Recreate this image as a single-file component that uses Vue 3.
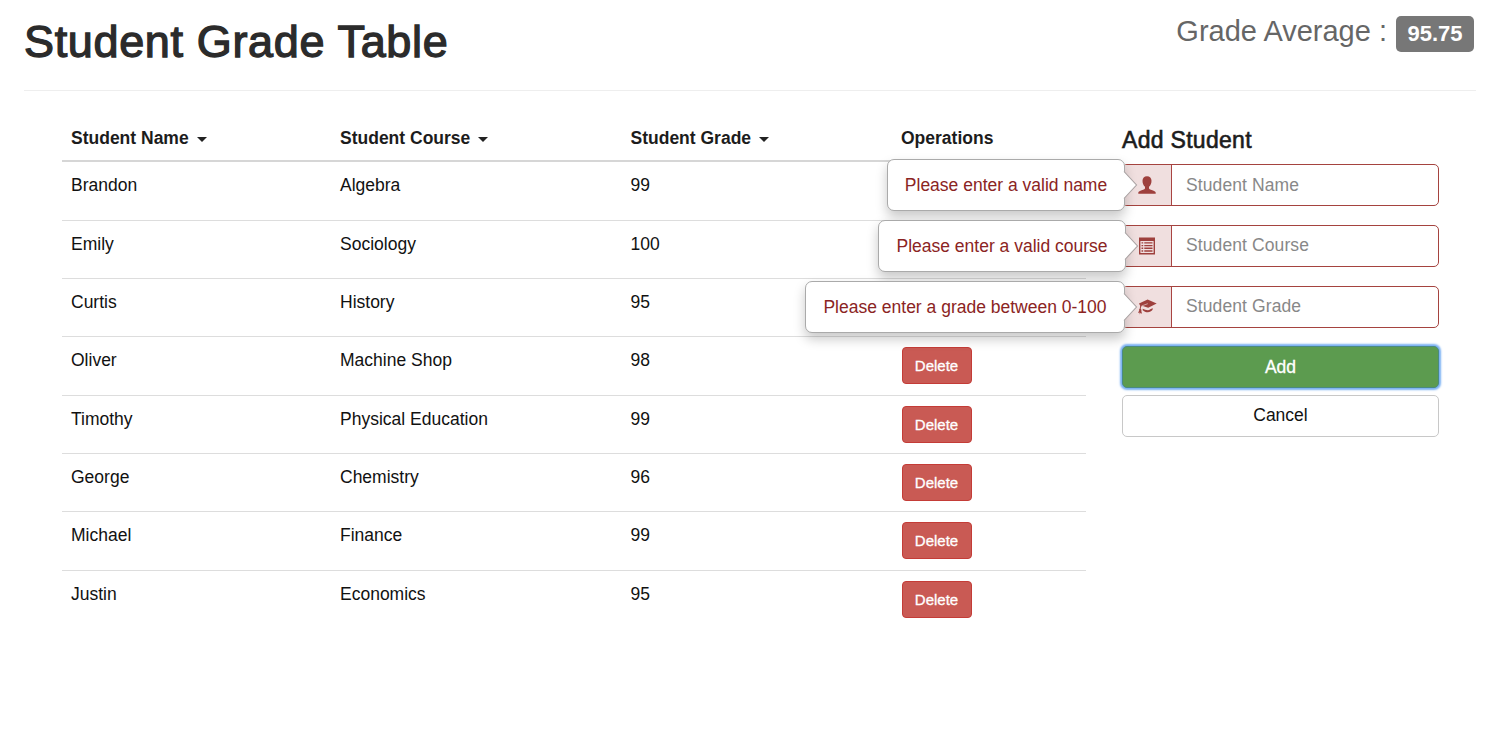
<script setup>
import { computed } from 'vue'

const columns = [
  { key: 'name', label: 'Student Name', sortable: true },
  { key: 'course', label: 'Student Course', sortable: true },
  { key: 'grade', label: 'Student Grade', sortable: true },
  { key: 'operations', label: 'Operations', sortable: false },
]

const students = [
  { name: 'Brandon', course: 'Algebra', grade: 99 },
  { name: 'Emily', course: 'Sociology', grade: 100 },
  { name: 'Curtis', course: 'History', grade: 95 },
  { name: 'Oliver', course: 'Machine Shop', grade: 98 },
  { name: 'Timothy', course: 'Physical Education', grade: 99 },
  { name: 'George', course: 'Chemistry', grade: 96 },
  { name: 'Michael', course: 'Finance', grade: 99 },
  { name: 'Justin', course: 'Economics', grade: 95 },
]

const fields = [
  { key: 'name', placeholder: 'Student Name', error: 'Please enter a valid name' },
  { key: 'course', placeholder: 'Student Course', error: 'Please enter a valid course' },
  { key: 'grade', placeholder: 'Student Grade', error: 'Please enter a grade between 0-100' },
]

// Each error popover lies over the operations cell of one row.
const coveredRows = computed(() => fields.filter((f) => f.error).length)
</script>

<template>
  <div class="page">
    <header class="page-header">
      <h1>Student Grade Table</h1>
      <div class="average"><span class="average-label">Grade Average :</span><span class="badge">95.75</span></div>
    </header>

    <main class="content">
      <section class="table">
        <div class="row head">
          <div v-for="c in columns" :key="c.key" class="th">
            <span>{{ c.label }}</span><i v-if="c.sortable" class="caret"></i>
          </div>
        </div>
        <div v-for="(s, i) in students" :key="s.name" class="row">
          <div class="td">{{ s.name }}</div>
          <div class="td">{{ s.course }}</div>
          <div class="td">{{ s.grade }}</div>
          <div class="td"><button v-if="i >= coveredRows" class="delete">Delete</button></div>
        </div>
      </section>

      <section class="form">
        <h4>Add Student</h4>
        <div v-for="f in fields" :key="f.key" class="group">
          <span class="addon">
            <svg v-if="f.key === 'name'" width="18" height="18" viewBox="0 0 18 18">
              <path d="M9 .2C6.200.2 4.500 1.900 4.500 4.800c0 2.700 1 4.800 2.500 6v1.500c0 .6-.4 1-1.200 1.300C2.700 14.700.3 15.400.3 16.600V17.700h17.400v-1.100c0-1.200-2.400-1.900-5.500-3-.8-.3-1.200-.7-1.200-1.300v-1.500c1.500-1.200 2.500-3.300 2.500-6C13.500 1.900 11.800.2 9 .2z" fill="currentColor" />
            </svg>
            <svg v-else-if="f.key === 'course'" width="18" height="18" viewBox="0 0 18 18">
              <path fill="currentColor" fill-rule="evenodd" d="M1 .5h16v17H1zM2.400 4v12.100h13.200V4z" />
              <path fill="currentColor" d="M3.500 5.200h1.700v1.400H3.500zM6.300 5.200h8.200v1.400H6.300zM3.500 7.900h1.700v1.400H3.500zM6.300 7.900h8.200v1.400H6.300zM3.500 10.600h1.700V12H3.500zM6.300 10.600h8.200V12H6.300zM3.500 13.300h1.700v1.400H3.500zM6.300 13.300h8.200v1.400H6.300z" />
            </svg>
            <svg v-else width="20" height="16" viewBox="0 0 20 16">
              <path fill="currentColor" d="M10.600.6 19.700 4.500 11.200 8.700 5.800 7 4.100 7.400 3.700 9.800l.8 1.200-.2 1 .8 3-1.400-1.200-1 1.600-.1-1.900L1 14l1.200-2.600-.1-.9.7-1.100.4-2.700L2 4.500z" />
              <path fill="none" stroke="#f0dfdf" stroke-width=".6" d="M4.500 7 10.800 4.700" />
              <path fill="currentColor" d="M5.700 9.700c1.700.4 3.200 1.500 5.200 1.500 1.700 0 3.200-1.300 4.700-2.100v1.700c-1.100 1.400-3 2.500-4.700 2.500-2 0-4-1.100-5.200-2.100z" />
            </svg>
          </span>
          <input type="text" :placeholder="f.placeholder" />
          <div class="popover" :class="'p-' + f.key">
            <span>{{ f.error }}</span>
            <svg class="arrow" width="15" height="28" viewBox="0 0 15 28">
              <path d="M0 .5H1L13.500 14 1 27.500H0z" fill="#fff" />
              <path d="M1 .5 13.500 14 1 27.500" fill="none" stroke="#a9a2a2" stroke-width="1.100" />
            </svg>
          </div>
        </div>
        <button class="btn add">Add</button>
        <button class="btn cancel">Cancel</button>
      </section>
    </main>
  </div>
</template>

<style>
body {
  margin: 0;
  background: #fff;
}
</style>

<style scoped>
* {
  box-sizing: border-box;
}
.page {
  width: 1500px;
  height: 730px;
  padding: 0 24px;
  overflow: hidden;
  font-family: "Liberation Sans", Arial, sans-serif;
  font-size: 17.500px;
  line-height: 24px;
  color: #111;
}
.page-header {
  display: flex;
  justify-content: space-between;
  height: 91px;
  border-bottom: 1px solid #eee;
}
h1 {
  margin: 17px 0 0;
  font-size: 45px;
  line-height: 50px;
  font-weight: 400;
  color: #2b2b2b;
  letter-spacing: 0.650px;
  -webkit-text-stroke: 1.300px #2b2b2b;
}
.average {
  display: flex;
  padding: 16px 2px 0 0;
  font-size: 29px;
  line-height: 30px;
  color: #666;
}
.badge {
  width: 78px;
  height: 36px;
  margin-left: 9px;
  border-radius: 5px;
  background: #777;
  color: #fff;
  font-size: 22px;
  font-weight: 700;
  line-height: 35px;
  text-align: center;
}
.content {
  display: flex;
  padding: 24px 37px 0 38px;
}
.table {
  width: 1024px;
}
.row {
  display: grid;
  grid-template-columns: 269px 290.500px 270.500px 194px;
  height: 58.350px;
  border-top: 1px solid #ddd;
}
.row.head {
  height: 45px;
  border-top: 0;
}
.head + .row {
  height: 59.500px;
  border-top: 2px solid #d6d6d6;
}
.th {
  display: flex;
  align-items: center;
  height: 46px;
  padding-left: 9px;
  font-size: 17.500px;
  font-weight: 700;
  color: #1c1c1c;
}
.caret {
  margin: 2px 0 0 8px;
  border-top: 5px solid #222;
  border-left: 5px solid transparent;
  border-right: 5px solid transparent;
}
.td {
  padding: 11px 0 0 9px;
}
.delete {
  display: block;
  width: 70px;
  height: 37px;
  margin: -1px 0 0 0.500px;
  padding: 0;
  border: 1px solid #c43c37;
  border-radius: 4px;
  background: #c95a54;
  color: #fff;
  font: 15px "Liberation Sans", Arial, sans-serif;
  -webkit-text-stroke: 0.300px #fff;
}
.form {
  width: 317px;
  margin-left: 36px;
}
h4 {
  margin: 12px 0 10px;
  font-size: 23px;
  line-height: 27px;
  font-weight: 400;
  letter-spacing: 0.300px;
  color: #1c1c1c;
  -webkit-text-stroke: 0.600px #1c1c1c;
}
.group {
  position: relative;
  display: flex;
  width: 317px;
  height: 42px;
  margin-bottom: 18.800px;
  border: 1.500px solid #a5433f;
  border-radius: 5px;
}
.addon {
  display: flex;
  align-items: center;
  justify-content: center;
  width: 49px;
  border-right: 1px solid #a94442;
  border-radius: 4px 0 0 4px;
  background: #f0dfdf;
  color: #9e403d;
}
input {
  flex: 1;
  min-width: 0;
  padding: 0 14px;
  border: 0;
  border-radius: 5px;
  outline: 0;
  background: transparent;
  font: 17.500px "Liberation Sans", Arial, sans-serif;
  letter-spacing: 0.100px;
}
input::placeholder {
  color: #888;
  opacity: 1;
}
.popover {
  position: absolute;
  top: -6px;
  right: 313px;
  display: flex;
  align-items: center;
  justify-content: center;
  width: 238px;
  height: 52px;
  border: 1px solid #aaa;
  border-radius: 7px;
  background: #fff;
  box-shadow: 0 6px 12px rgba(0, 0, 0, 0.220);
  color: #8b2423;
  white-space: nowrap;
}
.p-course {
  right: 312px;
  width: 248px;
}
.p-grade {
  width: 320px;
}
.arrow {
  position: absolute;
  top: 11px;
  right: -14px;
}
.btn {
  display: block;
  width: 317px;
  height: 42px;
  padding: 0;
  border-radius: 5px;
  font: 17.500px "Liberation Sans", Arial, sans-serif;
}
.add {
  border: 1px solid #4a8a83;
  background: #5c9b4f;
  color: #fff;
  box-shadow: 0 0 2px 2px #7ab1f3;
  -webkit-text-stroke: 0.300px #fff;
}
.cancel {
  margin-top: 6.500px;
  border: 1px solid #c8c8c8;
  background: #fff;
  color: #111;
}
</style>
